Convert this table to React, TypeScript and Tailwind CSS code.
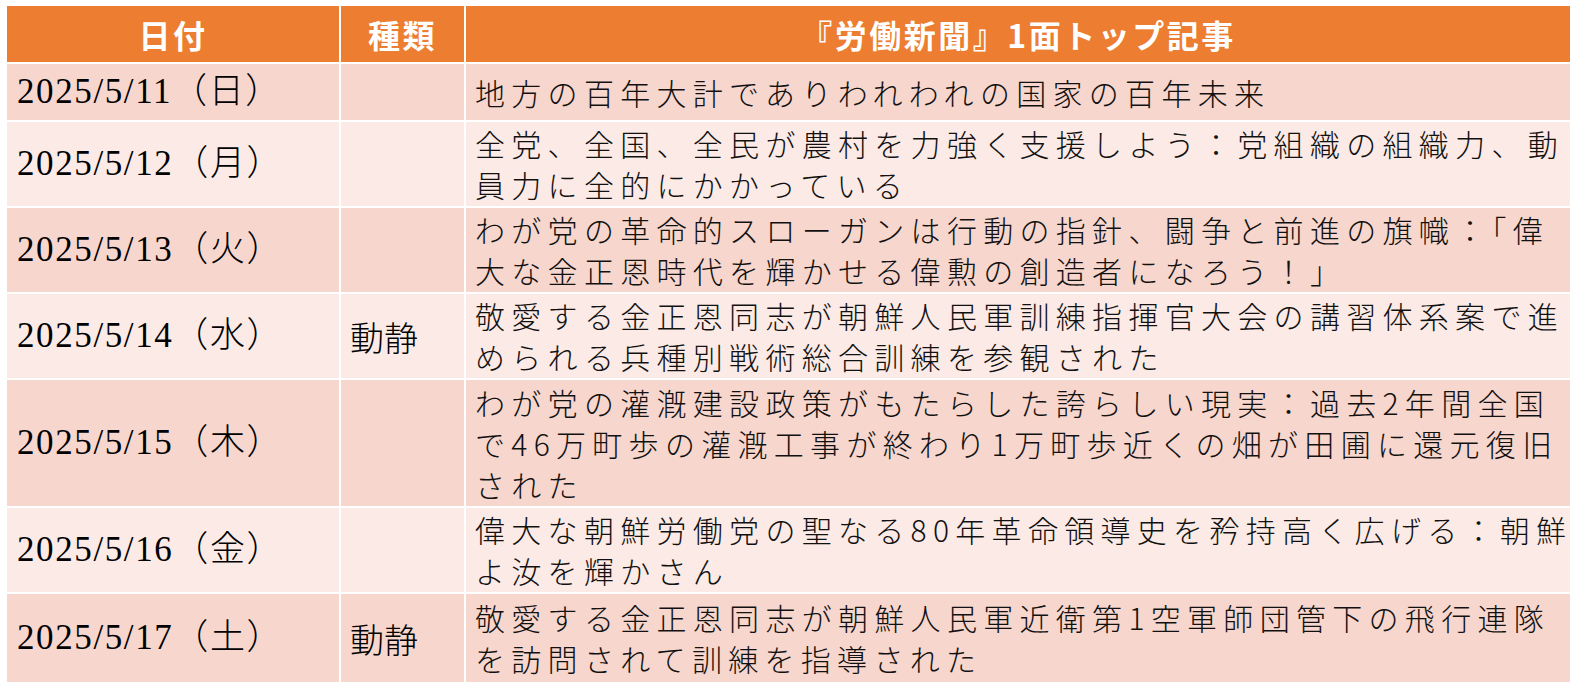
const rows: { date: string; kind: string; lines: string[]; h: string; tone: string }[] = [
  { date: "2025/5/11（日）", kind: "", lines: ["地方の百年大計でありわれわれの国家の百年未来"], h: "h-[56px]", tone: "bg-[#f7d6cd]" },
  {
    date: "2025/5/12（月）",
    kind: "",
    lines: ["全党、全国、全民が農村を力強く支援しよう：党組織の組織力、動", "員力に全的にかかっている"],
    h: "h-[84px]",
    tone: "bg-[#fbeae6]",
  },
  {
    date: "2025/5/13（火）",
    kind: "",
    lines: ["わが党の革命的スローガンは行動の指針、闘争と前進の旗幟：「偉", "大な金正恩時代を輝かせる偉勲の創造者になろう！」"],
    h: "h-[84px]",
    tone: "bg-[#f7d6cd]",
  },
  {
    date: "2025/5/14（水）",
    kind: "動静",
    lines: ["敬愛する金正恩同志が朝鮮人民軍訓練指揮官大会の講習体系案で進", "められる兵種別戦術総合訓練を参観された"],
    h: "h-[84px]",
    tone: "bg-[#fbeae6]",
  },
  {
    date: "2025/5/15（木）",
    kind: "",
    lines: [
      "わが党の灌漑建設政策がもたらした誇らしい現実：過去2年間全国",
      "で46万町歩の灌漑工事が終わり1万町歩近くの畑が田圃に還元復旧",
      "された",
    ],
    h: "h-[126px]",
    tone: "bg-[#f7d6cd]",
  },
  {
    date: "2025/5/16（金）",
    kind: "",
    lines: ["偉大な朝鮮労働党の聖なる80年革命領導史を矜持高く広げる：朝鮮", "よ汝を輝かさん"],
    h: "h-[84px]",
    tone: "bg-[#fbeae6]",
  },
  {
    date: "2025/5/17（土）",
    kind: "動静",
    lines: ["敬愛する金正恩同志が朝鮮人民軍近衛第1空軍師団管下の飛行連隊", "を訪問されて訓練を指導された"],
    h: "h-[88px]",
    tone: "bg-[#f7d6cd]",
  },
];

const serif = "font-['Liberation_Serif','Noto_Sans_CJK_JP',serif]";
const sans = "font-['Noto_Sans_CJK_JP','Noto_Sans',sans-serif]";

export default function App() {
  return (
    <div className="min-h-screen bg-white pl-[7px] pt-[6px]">
      <div className="grid w-[1563px] grid-cols-[332px_123px_1104px] gap-[2px] bg-white">
        {/* header */}
        {["日付", "種類", "『労働新聞』1面トップ記事"].map((t) => (
          <div
            key={t}
            className={`flex h-[56px] items-center justify-center bg-[#ec7d31] text-[32px] font-bold tracking-[2.5px] text-white ${sans}`}
          >
            {t}
          </div>
        ))}

        {rows.map((r) => (
          <Row key={r.date} {...r} />
        ))}
      </div>
    </div>
  );
}

function Row({ date, kind, lines, h, tone }: { date: string; kind: string; lines: string[]; h: string; tone: string }) {
  return (
    <>
      <div className={`flex items-center pl-[10px] text-[35px] font-light tracking-[1.6px] text-black ${h} ${tone} ${serif}`}>
        {date}
      </div>
      <div className={`flex items-center pl-[9px] text-[34px] font-light text-black ${h} ${tone} ${sans}`}>
        {kind}
      </div>
      <div
        className={`flex flex-col justify-center pl-[9px] text-[30px] font-light leading-[41px] tracking-[6.3px] whitespace-nowrap text-[#111] ${h} ${tone} ${sans}`}
      >
        {lines.map((l) => (
          <span key={l}>{l}</span>
        ))}
      </div>
    </>
  );
}
